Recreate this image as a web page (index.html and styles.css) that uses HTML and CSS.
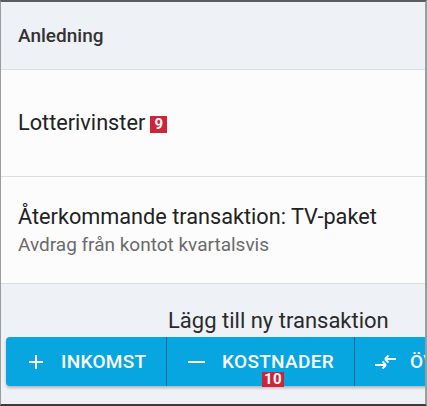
FILE: index.html
```html
<!DOCTYPE html>
<html lang="sv">
<head>
  <meta charset="UTF-8" />
  <meta name="viewport" content="width=device-width, initial-scale=1.0"/>
  <title>Transaktioner</title>
  <link rel="stylesheet" href="styles.css">
</head>
<body>
  <div class="screen">
    <div class="header">Anledning</div>

    <div class="row single">
      <span class="title">Lotterivinster</span>
      <span class="badge">9</span>
    </div>

    <div class="row">
      <div class="title">Återkommande transaktion: TV-paket</div>
      <div class="subtitle">Avdrag från kontot kvartalsvis</div>
    </div>

    <div class="footer">
      <div class="add-label">Lägg till ny transaktion</div>
      <div class="actions">
        <button class="action income">
          <svg width="16" height="16" viewBox="0 0 16 16"><path d="M8 1v14M1 8h14" stroke="#fff" stroke-width="2"/></svg>
          INKOMST
        </button>
        <button class="action expense">
          <svg width="17" height="16" viewBox="0 0 17 16"><path d="M0 8h17" stroke="#fff" stroke-width="2"/></svg>
          KOSTNADER
          <span class="badge badge-low">10</span>
        </button>
        <button class="action transfer">
          <svg width="21" height="16" viewBox="0 0 21 16"><path d="M21 5H10M10 5l3.5-3.5M10 5l3.5 3.5M0 11h11M11 11l-3.5-3.5M11 11l-3.5 3.5" stroke="#fff" stroke-width="1.8" fill="none"/></svg>
          ÖVERFÖRING
        </button>
      </div>
    </div>
  </div>
</body>
</html>
```

FILE: styles.css
```css
body {
  margin: 0;
  font-family: Roboto, "Noto Sans", sans-serif;
  background: #fff;
}

.screen {
  width: 427px;
  height: 406px;
  box-sizing: border-box;
  border-top: 2px solid #5a5c60;
  border-left: 1px solid #9a9c9f;
  border-right: 2px solid #9a9c9f;
  border-bottom: 2px solid #3a3b3d;
  display: flex;
  flex-direction: column;
  overflow: hidden;
  background: #eef1f6;
}

.header {
  height: 67px;
  flex-shrink: 0;
  display: flex;
  align-items: center;
  padding-left: 17px;
  font-size: 19px;
  font-weight: 500;
  color: #333;
  border-bottom: 1px solid #dcdee1;
}

.row {
  height: 106px;
  flex-shrink: 0;
  background: #fcfcfc;
  border-bottom: 1px solid #dcdee1;
  padding-left: 17px;
  display: flex;
  flex-direction: column;
  justify-content: center;
}

.row.single {
  flex-direction: row;
  justify-content: flex-start;
  align-items: center;
}

.title {
  font-size: 21.7px;
  line-height: 26px;
  color: #222;
}

.subtitle {
  font-size: 19px;
  line-height: 22px;
  color: #6b6b6b;
  margin-top: 4px;
}

.badge {
  display: inline-block;
  background: #cf2338;
  color: #fff;
  font-weight: 700;
  font-size: 15px;
  line-height: 17px;
  padding: 0 2px;
  min-width: 13px;
  text-align: center;
  margin-left: 5px;
  margin-top: 2px;
}

.footer {
  flex: 1;
  display: flex;
  flex-direction: column;
}

.add-label {
  margin-top: 25px;
  padding-left: 167px;
  font-size: 22px;
  color: #2a2a2a;
  line-height: 24px;
}

.actions {
  margin-top: 4px;
  margin-left: 5px;
  display: flex;
  height: 49px;
  background: #07a6e0;
  border-radius: 4px 0 0 4px;
  box-shadow: 0 2px 3px rgba(0, 0, 0, 0.25);
  width: 520px;
  flex-shrink: 0;
}

.action {
  position: relative;
  display: flex;
  align-items: center;
  flex-shrink: 0;
  background: none;
  border: none;
  border-right: 1px solid #1d6f95;
  color: #fff;
  font-family: Roboto, "Noto Sans", sans-serif;
  font-size: 19px;
  font-weight: 500;
  letter-spacing: 0.3px;
  padding: 0;
  cursor: pointer;
}

.action svg {
  margin-right: 17px;
}

.income {
  width: 161px;
  padding-left: 22px;
}

.expense {
  width: 188px;
  padding-left: 21px;
}

.transfer {
  padding-left: 20px;
  border-right: none;
  white-space: nowrap;
}

.transfer svg {
  margin-right: 14px;
}

.badge-low {
  position: absolute;
  left: 95px;
  top: 35px;
  line-height: 15px;
  margin: 0;
}
```
